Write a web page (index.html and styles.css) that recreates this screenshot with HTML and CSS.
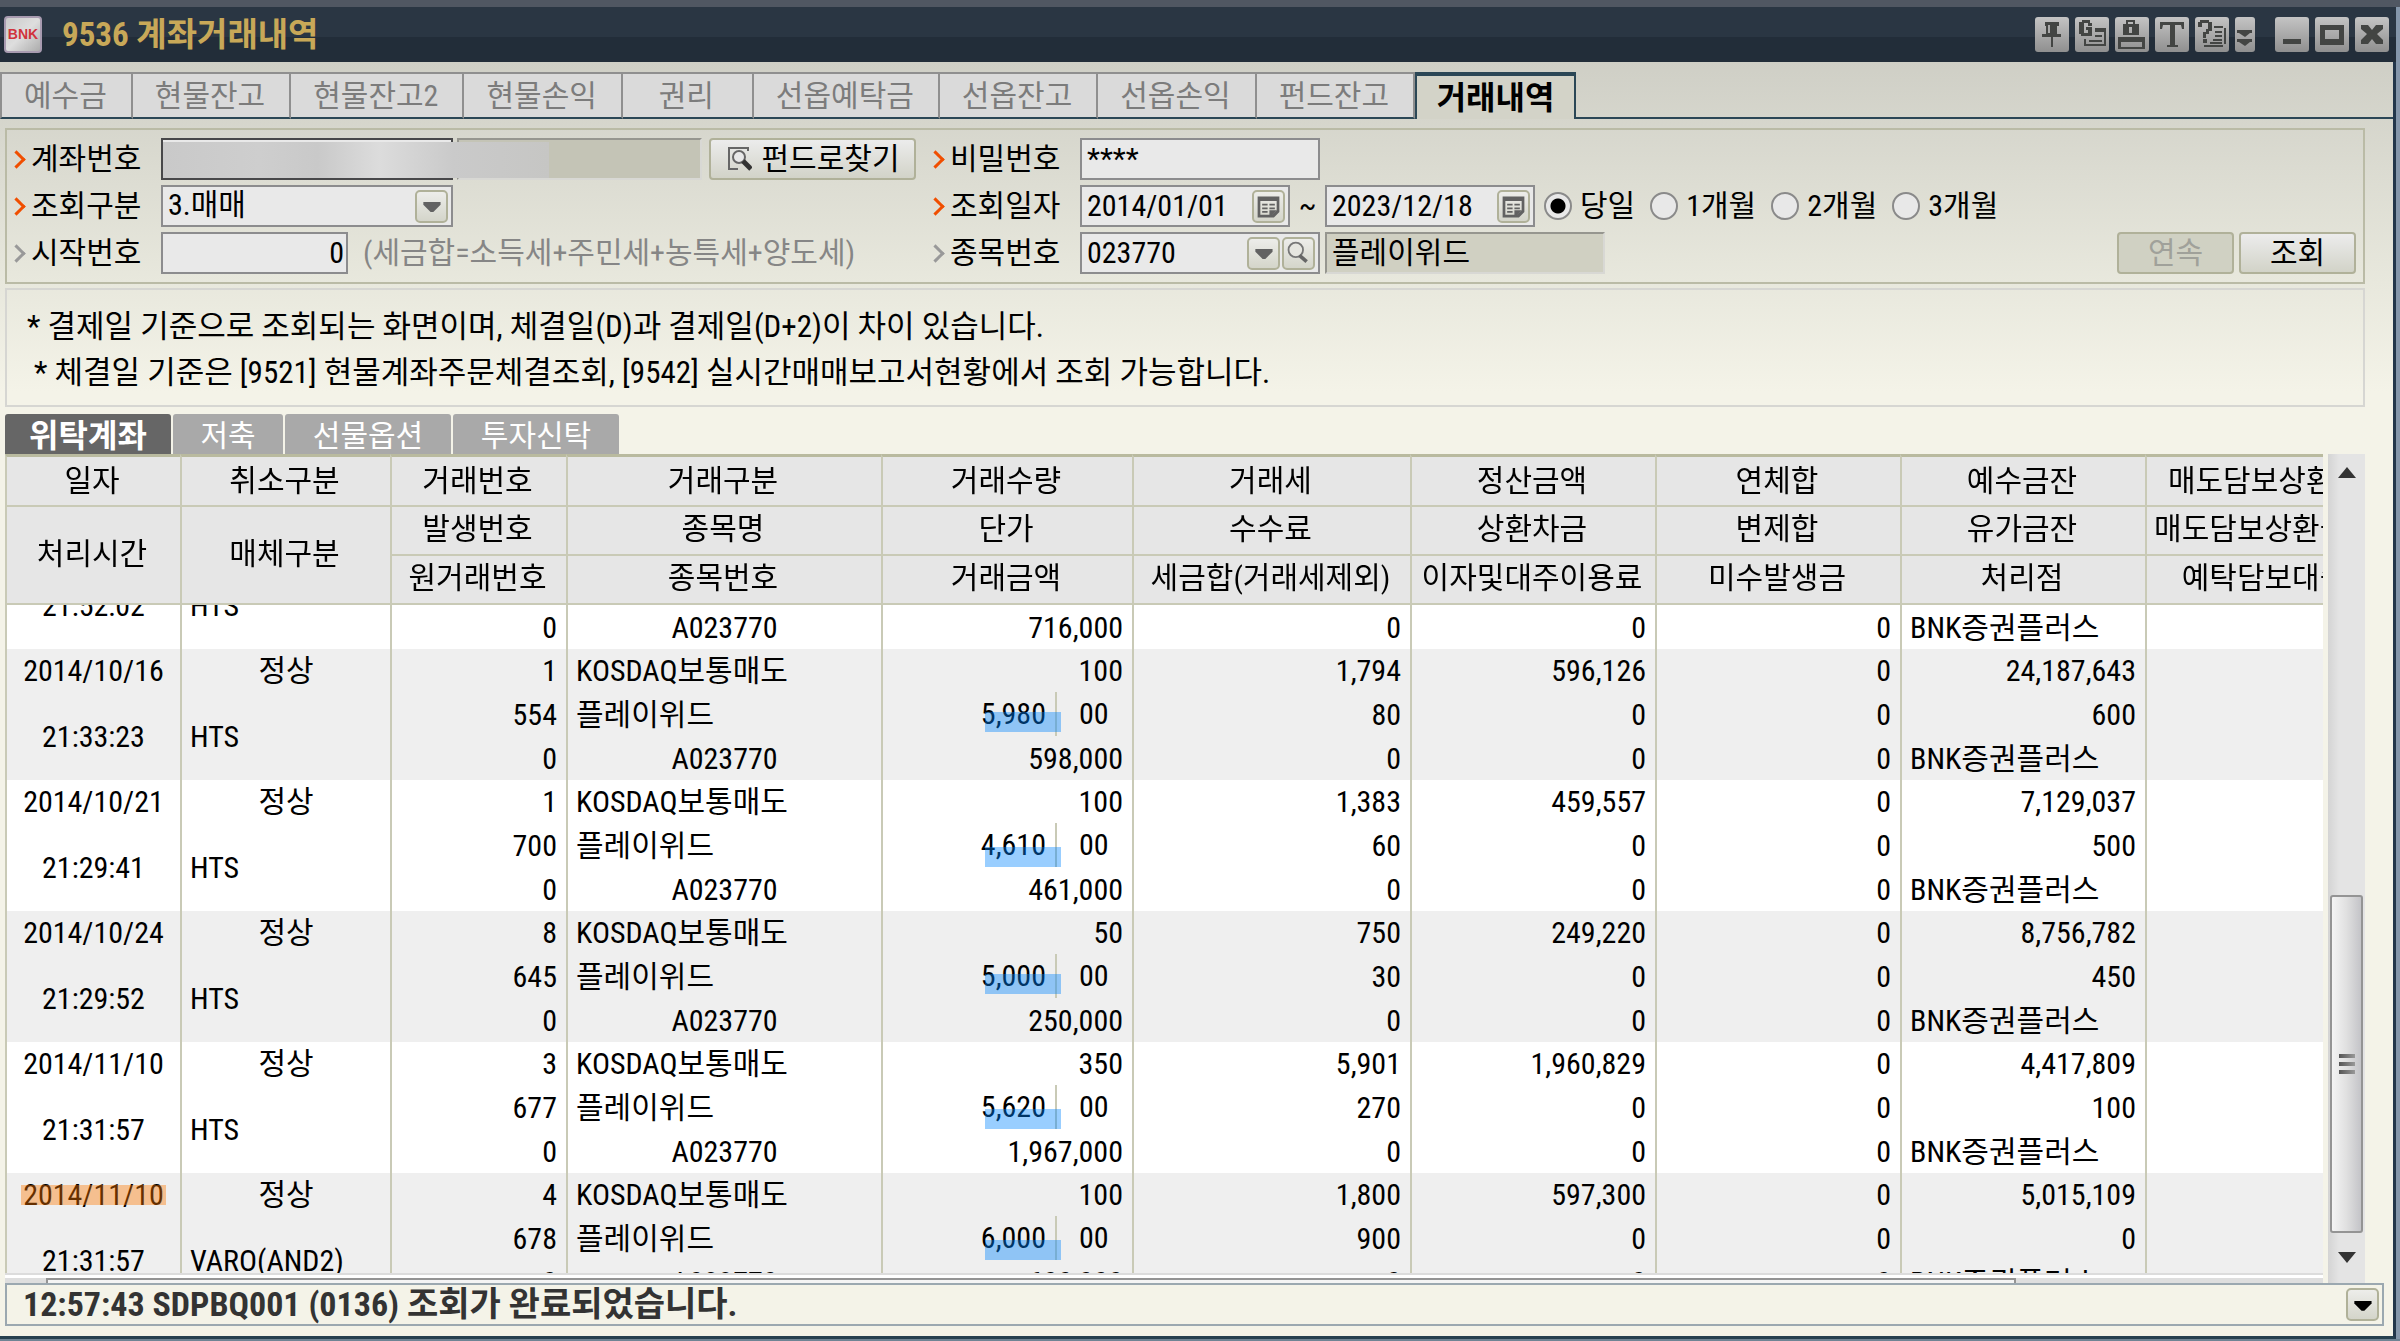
FILE: index.html
```html
<!DOCTYPE html>
<html lang="ko">
<head>
<meta charset="utf-8">
<title>9536 계좌거래내역</title>
<link rel="stylesheet" href="styles.css">
</head>
<body>
<div class="window">
  <header class="titlebar">
    <svg class="logo" viewBox="0 0 38 37" aria-hidden="true">
      <defs><linearGradient id="lg" x1="0" y1="0" x2="1" y2="1"><stop offset="0" stop-color="#c9c9c9"/><stop offset=".5" stop-color="#dedede"/><stop offset="1" stop-color="#a9a9a9"/></linearGradient></defs>
      <rect x="1" y="1" width="36" height="35" rx="3" fill="url(#lg)" stroke="#a89bb0" stroke-width="2"/>
      <text x="19" y="23" text-anchor="middle" class="logo-text">BNK</text>
    </svg>
    <h1 class="title">9536 계좌거래내역</h1>
    <div class="tools">
      <button class="tool" aria-label="고정"><svg viewBox="0 0 34 35"><path d="M10 5h14v4h-2v8h4v3H7v-3h4V9h-1zM16 20h2v10h-2z"/><path d="M13 8h2v8h-2z" fill="#aaa"/></svg></button>
      <button class="tool" aria-label="그룹"><svg viewBox="0 0 34 35"><path d="M7 3h8v3h2v3h-4V6H9v10h4v-3h-2v-3h6v9H6v-2H4V5h3zM20 11h11v18H9v-7h2v5h18V15h-9zM20 18h7v2h-7zM14 23h13v2H14z"/></svg></button>
      <button class="tool" aria-label="잠금"><svg viewBox="0 0 34 35"><path fill-rule="evenodd" d="M11 3h9v4h4v11H8V7h3zM13 5v2h5V5zM14 10v6h3v-6zM3 20h27v12H3zM6 25v5h21v-5z"/></svg></button>
      <button class="tool" aria-label="글꼴"><svg viewBox="0 0 34 35"><path d="M5 5h24v7h-2l-1-4h-6v20h3v2H12v-2h3V8H8l-1 4H5z"/></svg></button>
      <button class="tool" aria-label="도움말"><svg viewBox="0 0 34 35"><path d="M5 3h9v2h3v9h-3v3h-3v4H8v-6h3v-3h2V6H7v4H3V5h2zM8 22h4v4H8zM19 9h9v2h3v16h-2V11H19zM20 14h7v2h-7zM20 18h7v2h-7zM18 22h9v2h-9zM15 25h12v2H15zM9 28h19v2H9z"/></svg></button>
      <button class="tool narrow" aria-label="더보기"><svg viewBox="0 0 20 35"><path d="M2 13h15v3h-2l-5 4-6-4H2zM2 22h15v3h-2l-5 4-6-4H2z"/></svg></button>
      <button class="tool spaced" aria-label="최소화"><svg viewBox="0 0 34 35"><path d="M8 22h18v5H8z"/></svg></button>
      <button class="tool" aria-label="최대화"><svg viewBox="0 0 34 35"><path fill-rule="evenodd" d="M5 8h24v20H5zM10 13v9h14v-9z"/></svg></button>
      <button class="tool" aria-label="닫기"><svg viewBox="0 0 34 35"><path d="M6 8h7l4 5 4-5h7v4l-6 5 6 6v4h-7l-4-5-4 5H6v-4l6-6-6-5z"/></svg></button>
    </div>
  </header>

  <main class="content">
    <nav class="tabs">
      <button class="tab">예수금</button>
      <button class="tab">현물잔고</button>
      <button class="tab">현물잔고2</button>
      <button class="tab">현물손익</button>
      <button class="tab">권리</button>
      <button class="tab">선옵예탁금</button>
      <button class="tab">선옵잔고</button>
      <button class="tab">선옵손익</button>
      <button class="tab">펀드잔고</button>
      <button class="tab active">거래내역</button>
      <span class="tab-rest"></span>
    </nav>

    <form class="search">
      <div class="field">
        <label class="label" for="account">계좌번호</label>
        <input class="box account" id="account" type="text">
        <input class="box readonly holder" type="text" aria-label="계좌명" readonly>
        <span class="mask"></span>
        <button class="btn find" type="button"><svg viewBox="0 0 26 26" aria-hidden="true"><path d="M22 5V2H3v21h9" fill="none" stroke="#666" stroke-width="2"/><circle cx="13" cy="11" r="6" fill="#e8e8e8" stroke="#666" stroke-width="2"/><path d="M17 15l8 8" stroke="#333" stroke-width="5"/></svg>펀드로찾기</button>
      </div>
      <div class="field">
        <label class="label" for="pw">비밀번호</label>
        <input class="box w240" id="pw" type="text" value="****">
      </div>
      <div class="field">
        <label class="label" for="kind">조회구분</label>
        <div class="box combo kind">
          <select class="plain" id="kind"><option>3.매매</option></select>
          <span class="mini" aria-hidden="true"><svg viewBox="0 0 32 32"><path class="ink" d="M7 11h19v3l-8 8h-3l-8-8z"/></svg></span>
        </div>
      </div>
      <div class="field">
        <label class="label" for="from">조회일자</label>
        <div class="box combo date">
          <input class="plain" id="from" type="text" value="2014/01/01">
          <button class="mini" type="button" aria-label="시작일 선택"><svg viewBox="0 0 32 32"><path class="ink" fill-rule="evenodd" d="M4 5h24v17l-6 6H4zM7 10v15h13l5-5V10z"/><path class="ink" d="M9 13h6v2H9zM17 13h6v2h-6zM9 17h6v2H9zM17 17h6v2h-6zM9 21h6v2H9zM17 20h8l-6 7h-2z"/></svg></button>
        </div>
        <span class="tilde">~</span>
        <div class="box combo date">
          <input class="plain" type="text" value="2023/12/18" aria-label="종료일">
          <button class="mini" type="button" aria-label="종료일 선택"><svg viewBox="0 0 32 32"><path class="ink" fill-rule="evenodd" d="M4 5h24v17l-6 6H4zM7 10v15h13l5-5V10z"/><path class="ink" d="M9 13h6v2H9zM17 13h6v2h-6zM9 17h6v2H9zM17 17h6v2h-6zM9 21h6v2H9zM17 20h8l-6 7h-2z"/></svg></button>
        </div>
        <div class="periods">
          <label class="period"><input type="radio" name="period" checked>당일</label>
          <label class="period"><input type="radio" name="period">1개월</label>
          <label class="period"><input type="radio" name="period">2개월</label>
          <label class="period"><input type="radio" name="period">3개월</label>
        </div>
      </div>
      <div class="field">
        <label class="label optional" for="start">시작번호</label>
        <input class="box start" id="start" type="text" value="0">
        <span class="hint">(세금합=소득세+주민세+농특세+양도세)</span>
      </div>
      <div class="field">
        <label class="label optional" for="code">종목번호</label>
        <div class="box combo w240">
          <input class="plain" id="code" type="text" value="023770">
          <button class="mini" type="button" aria-label="목록"><svg viewBox="0 0 32 32"><path class="ink" d="M7 11h19v3l-8 8h-3l-8-8z"/></svg></button>
          <button class="mini" type="button" aria-label="종목 찾기"><svg viewBox="0 0 32 32"><circle cx="13" cy="12" r="8" fill="#e6e6e0" stroke="#777" stroke-width="2"/><path d="M17 18l8 7" stroke="#666" stroke-width="4"/></svg></button>
        </div>
        <input class="box readonly name" type="text" value="플레이위드" aria-label="종목명" readonly>
        <div class="actions">
          <button class="btn" type="button" disabled>연속</button>
          <button class="btn" type="button">조회</button>
        </div>
      </div>
    </form>

    <section class="notes">
      <p class="note">* 결제일 기준으로 조회되는 화면이며, 체결일(D)과 결제일(D+2)이 차이 있습니다.</p>
      <p class="note indent">* 체결일 기준은 [9521] 현물계좌주문체결조회, [9542] 실시간매매보고서현황에서 조회 가능합니다.</p>
    </section>

    <nav class="subtabs">
      <button class="subtab active">위탁계좌</button>
      <button class="subtab short">저축</button>
      <button class="subtab">선물옵션</button>
      <button class="subtab">투자신탁</button>
    </nav>

    <div class="grid-area">
      <div class="grid" id="grid">
        <table class="ledger">
          <colgroup><col class="c-date"><col class="c-media"><col class="c-no"><col class="c-item"><col class="c-amt"><col class="c-tax"><col class="c-sum"><col class="c-sum"><col class="c-sum"><col class="c-last"></colgroup>
          <thead>
            <tr class="h1"><th>일자</th><th>취소구분</th><th>거래번호</th><th>거래구분</th><th>거래수량</th><th>거래세</th><th>정산금액</th><th>연체합</th><th>예수금잔</th><th>매도담보상환금</th></tr>
            <tr class="h2"><th rowspan="2">처리시간</th><th rowspan="2">매체구분</th><th>발생번호</th><th>종목명</th><th>단가</th><th>수수료</th><th>상환차금</th><th>변제합</th><th>유가금잔</th><th>매도담보상환금액</th></tr>
            <tr class="h3"><th>원거래번호</th><th>종목번호</th><th>거래금액</th><th>세금합(거래세제외)</th><th>이자및대주이용료</th><th>미수발생금</th><th>처리점</th><th>예탁담보대출</th></tr>
          </thead>
          <tbody>
            <tr class="r2"><td rowspan="2">21:52:02</td><td rowspan="2" class="l">HTS</td><td></td><td></td><td></td><td></td><td></td><td></td><td></td><td></td></tr>
            <tr class="r3"><td class="n">0</td><td>A023770</td><td class="n">716,000</td><td class="n">0</td><td class="n">0</td><td class="n">0</td><td class="l">BNK증권플러스</td><td></td></tr>
          </tbody>
          <tbody class="alt">
            <tr class="r1"><td>2014/10/16</td><td>정상</td><td class="n">1</td><td class="l">KOSDAQ보통매도</td><td class="n">100</td><td class="n">1,794</td><td class="n">596,126</td><td class="n">0</td><td class="n">24,187,643</td><td></td></tr>
            <tr class="r2"><td rowspan="2">21:33:23</td><td rowspan="2" class="l">HTS</td><td class="n">554</td><td class="l">플레이위드</td><td class="n"><div class="price"><span class="won">5,980</span><span class="jeon">00</span><i class="mark"></i></div></td><td class="n">80</td><td class="n">0</td><td class="n">0</td><td class="n">600</td><td></td></tr>
            <tr class="r3"><td class="n">0</td><td>A023770</td><td class="n">598,000</td><td class="n">0</td><td class="n">0</td><td class="n">0</td><td class="l">BNK증권플러스</td><td></td></tr>
          </tbody>
          <tbody>
            <tr class="r1"><td>2014/10/21</td><td>정상</td><td class="n">1</td><td class="l">KOSDAQ보통매도</td><td class="n">100</td><td class="n">1,383</td><td class="n">459,557</td><td class="n">0</td><td class="n">7,129,037</td><td></td></tr>
            <tr class="r2"><td rowspan="2">21:29:41</td><td rowspan="2" class="l">HTS</td><td class="n">700</td><td class="l">플레이위드</td><td class="n"><div class="price"><span class="won">4,610</span><span class="jeon">00</span><i class="mark low"></i></div></td><td class="n">60</td><td class="n">0</td><td class="n">0</td><td class="n">500</td><td></td></tr>
            <tr class="r3"><td class="n">0</td><td>A023770</td><td class="n">461,000</td><td class="n">0</td><td class="n">0</td><td class="n">0</td><td class="l">BNK증권플러스</td><td></td></tr>
          </tbody>
          <tbody class="alt">
            <tr class="r1"><td>2014/10/24</td><td>정상</td><td class="n">8</td><td class="l">KOSDAQ보통매도</td><td class="n">50</td><td class="n">750</td><td class="n">249,220</td><td class="n">0</td><td class="n">8,756,782</td><td></td></tr>
            <tr class="r2"><td rowspan="2">21:29:52</td><td rowspan="2" class="l">HTS</td><td class="n">645</td><td class="l">플레이위드</td><td class="n"><div class="price"><span class="won">5,000</span><span class="jeon">00</span><i class="mark"></i></div></td><td class="n">30</td><td class="n">0</td><td class="n">0</td><td class="n">450</td><td></td></tr>
            <tr class="r3"><td class="n">0</td><td>A023770</td><td class="n">250,000</td><td class="n">0</td><td class="n">0</td><td class="n">0</td><td class="l">BNK증권플러스</td><td></td></tr>
          </tbody>
          <tbody>
            <tr class="r1"><td>2014/11/10</td><td>정상</td><td class="n">3</td><td class="l">KOSDAQ보통매도</td><td class="n">350</td><td class="n">5,901</td><td class="n">1,960,829</td><td class="n">0</td><td class="n">4,417,809</td><td></td></tr>
            <tr class="r2"><td rowspan="2">21:31:57</td><td rowspan="2" class="l">HTS</td><td class="n">677</td><td class="l">플레이위드</td><td class="n"><div class="price"><span class="won">5,620</span><span class="jeon">00</span><i class="mark low"></i></div></td><td class="n">270</td><td class="n">0</td><td class="n">0</td><td class="n">100</td><td></td></tr>
            <tr class="r3"><td class="n">0</td><td>A023770</td><td class="n">1,967,000</td><td class="n">0</td><td class="n">0</td><td class="n">0</td><td class="l">BNK증권플러스</td><td></td></tr>
          </tbody>
          <tbody class="alt">
            <tr class="r1"><td><div class="dated">2014/11/10<i class="mark orange"></i></div></td><td>정상</td><td class="n">4</td><td class="l">KOSDAQ보통매도</td><td class="n">100</td><td class="n">1,800</td><td class="n">597,300</td><td class="n">0</td><td class="n">5,015,109</td><td></td></tr>
            <tr class="r2"><td rowspan="2">21:31:57</td><td rowspan="2" class="l">VARO(AND2)</td><td class="n">678</td><td class="l">플레이위드</td><td class="n"><div class="price"><span class="won">6,000</span><span class="jeon">00</span><i class="mark low"></i></div></td><td class="n">900</td><td class="n">0</td><td class="n">0</td><td class="n">0</td><td></td></tr>
            <tr class="r3"><td class="n">0</td><td>A023770</td><td class="n">600,000</td><td class="n">0</td><td class="n">0</td><td class="n">0</td><td class="l">BNK증권플러스</td><td></td></tr>
          </tbody>
        </table>
      </div>
      <div class="vscroll" aria-hidden="true">
        <svg class="arrow" viewBox="0 0 37 38"><path d="M19 13l9 11H10z" fill="#333"/></svg>
        <span class="above"></span>
        <span class="thumb"><i></i><i></i><i></i></span>
        <svg class="arrow" viewBox="0 0 37 38"><path d="M10 15h18l-9 11z" fill="#333"/></svg>
      </div>
      <div class="hscroll" aria-hidden="true"><span class="hthumb"></span></div>
    </div>

    <footer class="status">
      <p class="message">12:57:43 SDPBQ001 (0136) 조회가 완료되었습니다.</p>
      <button class="mini" aria-label="메시지 목록"><svg viewBox="0 0 32 32"><path d="M7 12h19v3l-8 8h-3l-8-8z"/></svg></button>
    </footer>
  </main>
</div>
<script src="script.js"></script>
</body>
</html>
```
FILE: styles.css
```css
* { box-sizing: border-box; }

body {
  margin: 0;
  background: #8496aa;
  color: #000;
  font: 30px/44px "Roboto Condensed", "Noto Sans CJK KR", sans-serif;
}

button, input, select {
  margin: 0;
  padding: 0;
  border: 0;
  background: none;
  color: inherit;
  font: inherit;
}

h1, p { margin: 0; }
svg { display: block; }

.window {
  display: flex;
  flex-direction: column;
  height: 100vh;
  border-top: 7px solid #505762;
  border-bottom: 2px solid #6f8494;
}

/* Title bar */
.titlebar {
  display: flex;
  align-items: center;
  height: 55px;
  flex: none;
  margin-right: 4px;
  padding: 0 7px 0 4px;
  background: linear-gradient(#2a3643 0 54%, #222d39 54%);
}
.logo { width: 38px; height: 37px; margin-right: 20px; }
.logo-text { font: bold 14px "Liberation Sans", sans-serif; fill: #d0343c; }
.title { color: #c8a858; font-size: 33px; font-weight: 700; }
.tools { display: flex; gap: 6px; margin-left: auto; }
.tool {
  width: 34px;
  height: 35px;
  border-radius: 3px;
  background: linear-gradient(#c4c4c4, #8f8f8f);
}
.tool svg { width: 100%; height: 35px; fill: #434543; }
.narrow { width: 20px; }
.spaced { margin-left: 14px; }

.content {
  display: flex;
  flex-direction: column;
  flex: 1;
  min-height: 0;
  margin-right: 4px;
  padding: 10px 0;
  border-right: 3px solid #22364a;
  border-bottom: 3px solid #26404f;
  background: linear-gradient(#cfcfc6, #e8e8dd 220px, #f4f3e8 330px);
}

/* Screen tabs */
.tabs { display: flex; height: 47px; flex: none; margin-bottom: 9px; }
.tab {
  min-width: 131px;
  padding: 0 24px 0 22px;
  border: solid #8f8f8f;
  border-width: 2px 2px 0 0;
  border-bottom: 2px solid #2b4756;
  background: #dadada;
  color: #7c7c7c;
}
.tab:first-child { border-left: 2px solid #8f8f8f; }
.tab.active {
  width: 161px;
  padding: 0;
  border: solid #2b4756;
  border-width: 4px 2px 0 2px;
  background: #d3d3c8;
  color: #000;
  font-size: 32px;
  font-weight: 700;
}
.tab-rest { flex: 1; border-bottom: 2px solid #2b4756; }

/* Search conditions */
.search {
  display: grid;
  grid-template-columns: 919px 1fr;
  row-gap: 5px;
  flex: none;
  margin: 0 28px 4px 5px;
  padding: 8px 7px;
  border: 2px solid #babba6;
}
.field { position: relative; display: flex; align-items: center; height: 42px; }
.label { position: relative; width: 147px; padding-left: 17px; }
.label::before {
  content: "";
  position: absolute;
  left: -4px;
  top: 16px;
  width: 10px;
  height: 10px;
  border: solid #f04e00;
  border-width: 3px 3px 0 0;
  transform: rotate(45deg);
}
.label.optional::before { border-color: #999; }
.box {
  height: 42px;
  padding: 0 5px;
  border: 2px solid #8c8c8e;
  background: #e9e9e9;
}
.w240 { width: 240px; }
.account { width: 292px; border-color: #48484a; }
.readonly { border-color: #96968f #d8d8d4 #d8d8d4 #96968f; background: #d0d0c2; }
.holder { width: 245px; margin-left: 4px; background: #c4c4b6; }
.mask {
  position: absolute;
  left: 149px;
  top: 4px;
  width: 386px;
  height: 36px;
  background: linear-gradient(90deg, #c9c9c9, #cecece 25%, #c9c9c9 40%, #dcdcdc 56%, #cacaca 75%, #c6c6c4);
}
.kind { width: 292px; }
.combo { display: flex; align-items: center; gap: 2px; padding-right: 3px; }
.plain { flex: 1; min-width: 0; height: 38px; appearance: none; outline: 0; }
select.plain { line-height: 36px; padding-bottom: 2px; }
.mini {
  width: 33px;
  height: 33px;
  flex: none;
  border: 2px solid #b0b199;
  border-radius: 5px;
  background: linear-gradient(#ededea, #d4d5ca);
}
.mini svg { width: 29px; height: 29px; }
.ink { fill: #626262; }
.date { width: 210px; }
.tilde { width: 35px; text-align: center; }
.start { width: 187px; padding-right: 2px; text-align: right; }
.hint { margin-left: 15px; color: #868686; }
.name { width: 280px; margin-left: 5px; }
.periods { display: flex; gap: 15px; margin-left: 9px; }
.period { display: flex; align-items: center; gap: 8px; }
.period input {
  appearance: none;
  width: 28px;
  height: 28px;
  border: 2px solid #8a8a8a;
  border-radius: 50%;
  background: #e8e8e8;
}
.period input:checked { background: radial-gradient(circle, #000 0 7px, #e8e8e8 8px); }
.btn {
  display: flex;
  align-items: center;
  justify-content: center;
  width: 117px;
  height: 42px;
  border: 2px solid #b0b199;
  border-radius: 4px;
  background: linear-gradient(#ececec, #d2d3c8);
}
.btn:disabled { background: #d0d1c3; color: #a0a19a; }
.find { width: 207px; gap: 10px; margin-left: 7px; }
.find svg { width: 26px; height: 26px; }
.actions { display: flex; gap: 5px; margin-left: auto; }

/* Notes */
.notes {
  flex: none;
  height: 119px;
  margin: 0 28px 7px 5px;
  padding: 14px 20px;
  border: 2px solid #d6d6d2;
}
.note { font-size: 31px; line-height: 46px; white-space: nowrap; }
.indent { padding-left: 7px; }

/* Ledger tabs */
.subtabs { display: flex; gap: 2px; flex: none; height: 40px; padding-left: 5px; }
.subtab {
  width: 166px;
  border-radius: 3px 3px 0 0;
  background: #a9a9a9;
  color: #fff;
}
.subtab.short { width: 110px; }
.subtab.active { background: #666; font-size: 32px; font-weight: 700; }

/* Ledger */
.grid-area {
  display: grid;
  grid-template: minmax(0, 1fr) 8px / minmax(0, 1fr) 37px;
  column-gap: 5px;
  flex: 1;
  min-height: 0;
  margin: 0 28px 0 5px;
}
.grid {
  overflow: hidden;
  border-bottom: 2px solid #dcdcdc;
  background: #fff;
}
.ledger {
  width: 2380px;
  table-layout: fixed;
  border-collapse: separate;
  border-spacing: 0;
}
.c-date { width: 175px; }
.c-media { width: 210px; }
.c-no { width: 176px; }
.c-item { width: 315px; }
.c-amt { width: 251px; }
.c-tax { width: 278px; }
.c-sum { width: 245px; }
.c-last { width: 240px; }
.ledger thead { position: sticky; top: 0; z-index: 2; }
.ledger th {
  padding: 0 3px 3px 0;
  border-left: 2px solid #c9cab6;
  border-bottom: 2px solid #c9cab6;
  background: #e6e6e6;
  font-weight: 400;
  line-height: 40px;
  white-space: nowrap;
}
.h1 { height: 53px; }
.h1 th { padding-bottom: 0; border-top: 3px solid #b9ba9f; }
.h2, .h3 { height: 49px; }
.ledger td {
  padding: 0 8px;
  border-left: 2px solid #c9cab6;
  line-height: 43px;
  text-align: center;
  white-space: nowrap;
}
.ledger td.l { text-align: left; }
.ledger td.n { padding-right: 9px; text-align: right; }
.alt { background: #efefef; }
.r1 { height: 43px; }
.r2, .r3 { height: 44px; }
.price { position: relative; display: flex; justify-content: flex-end; height: 44px; }
.won { padding-right: 9px; border-right: 2px solid #c9cab6; }
.jeon { width: 66px; padding-left: 22px; text-align: left; }
.mark {
  position: absolute;
  top: 20px;
  right: 62px;
  width: 76px;
  height: 20px;
  background: rgba(0, 132, 255, .4);
}
.mark.low { top: 24px; }
.dated { position: relative; }
.mark.orange { top: 12px; right: 6px; left: 6px; width: auto; background: rgba(255, 120, 0, .4); }

/* Scroll bars */
.vscroll {
  display: flex;
  flex-direction: column;
  grid-row: 1 / 3;
  grid-column: 2;
  align-items: center;
  padding-bottom: 8px;
  background: linear-gradient(90deg, #d4d4d4, #e4e4e4 30%);
}
.arrow { width: 37px; height: 38px; flex: none; }
.above { flex: 406; }
.thumb {
  display: flex;
  flex: 336;
  flex-direction: column;
  align-items: center;
  justify-content: center;
  gap: 4px;
  width: 33px;
  margin-bottom: 4px;
  border: 2px solid #949494;
  border-radius: 3px;
  background: linear-gradient(90deg, #f4f4f4, #e0e0e0 50%, #c4c4c8);
}
.thumb i { width: 16px; height: 4px; background: linear-gradient(90deg, #555, #999); }
.hscroll { padding-top: 3px; background: linear-gradient(#fff 3px, #dedede 3px); }
.hthumb {
  display: block;
  width: 85%;
  height: 5px;
  margin-left: 41px;
  border: solid #949494;
  border-width: 2px 2px 0;
  background: #f4f4f4;
}

/* Status line */
.status {
  display: flex;
  align-items: center;
  flex: none;
  height: 43px;
  margin: 0 9px 0 5px;
  padding: 0 3px 0 16px;
  border: 2px solid #9ba8b0;
  background: #f4f3e8;
}
.message { flex: 1; color: #333; font-size: 34px; font-weight: 700; line-height: 39px; }
```
FILE: script.js
```js
document.getElementById("grid").scrollTop = 44;
```
